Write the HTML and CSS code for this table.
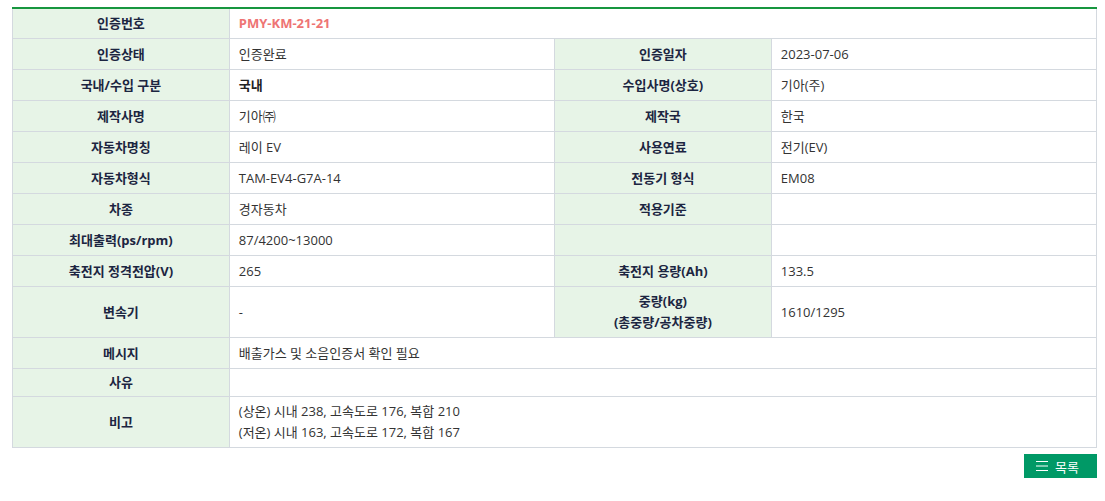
FILE: index.html
```html
<!DOCTYPE html>
<html lang="ko">
<head>
<meta charset="utf-8">
<title>인증정보</title>
<link rel="stylesheet" href="styles.css">
</head>
<body>
<div class="wrap">
  <table class="info">
    <colgroup>
      <col class="c-label"><col class="c-value"><col class="c-label"><col class="c-value">
    </colgroup>
    <tbody>
      <tr class="first"><th>인증번호</th><td colspan="3" class="cert-no">PMY-KM-21-21</td></tr>
      <tr><th>인증상태</th><td>인증완료</td><th>인증일자</th><td>2023-07-06</td></tr>
      <tr><th>국내/수입 구분</th><td class="strong">국내</td><th>수입사명(상호)</th><td>기아(주)</td></tr>
      <tr><th>제작사명</th><td>기아㈜</td><th>제작국</th><td>한국</td></tr>
      <tr><th>자동차명칭</th><td>레이 EV</td><th>사용연료</th><td>전기(EV)</td></tr>
      <tr><th>자동차형식</th><td>TAM-EV4-G7A-14</td><th>전동기 형식</th><td>EM08</td></tr>
      <tr><th>차종</th><td>경자동차</td><th>적용기준</th><td></td></tr>
      <tr><th>최대출력(ps/rpm)</th><td>87/4200~13000</td><th></th><td></td></tr>
      <tr><th>축전지 정격전압(V)</th><td>265</td><th>축전지 용량(Ah)</th><td>133.5</td></tr>
      <tr><th>변속기</th><td>-</td><th>중량(kg)<br>(총중량/공차중량)</th><td>1610/1295</td></tr>
      <tr><th>메시지</th><td colspan="3">배출가스 및 소음인증서 확인 필요</td></tr>
      <tr class="short"><th>사유</th><td colspan="3"></td></tr>
      <tr><th>비고</th><td colspan="3">(상온) 시내 238, 고속도로 176, 복합 210<br>(저온) 시내 163, 고속도로 172, 복합 167</td></tr>
    </tbody>
  </table>
  <div class="actions">
    <a class="btn-list" href="#">
      <svg class="ico" width="12" height="10" viewBox="0 0 12 10" aria-hidden="true">
        <path d="M0 0.5H12M0 5H12M0 9.5H12" stroke="#fff" stroke-width="1" fill="none"/>
      </svg>
      <span>목록</span>
    </a>
  </div>
</div>
</body>
</html>
```

FILE: styles.css
```css
* { box-sizing: border-box; }
html, body { margin: 0; padding: 0; background: #fff; }
body {
  font-family: "Open Sans", "Noto Sans CJK KR", sans-serif;
  font-size: 13px;
  color: #333;
}
.wrap {
  padding: 7px 8px 0 12px;
}
.info {
  width: 100%;
  border-collapse: collapse;
  table-layout: fixed;
  border-top: 2px solid #17963f;
}
.c-label { width: 20%; }
.c-value { width: 30%; }
.info th, .info td {
  border: 1px solid #d4d9df;
  padding: 4px 9px;
  line-height: 21px;
  height: 31px;
  vertical-align: middle;
}
.info tr.first th, .info tr.first td { border-top: 0; height: 30px; }
.info th {
  background: #e7f4e7;
  color: #1c2541;
  font-weight: 700;
  text-align: center;
}
.info td {
  text-align: left;
  color: #333;
}
.info tr.short th, .info tr.short td { height: 28px; padding-top: 3px; padding-bottom: 3px; }
.info td.cert-no {
  color: #ee7474;
  font-weight: 700;
}
.info td.strong { font-weight: 700; color: #222; }
.actions {
  display: flex;
  justify-content: flex-end;
  margin-top: 6px;
}
.btn-list {
  display: flex;
  align-items: center;
  gap: 7px;
  height: 24px;
  width: 73px;
  padding: 0 0 0 12px;
  background: #009966;
  color: #fff;
  text-decoration: none;
  font-size: 13px;
}
.btn-list .ico { display: block; }
```
